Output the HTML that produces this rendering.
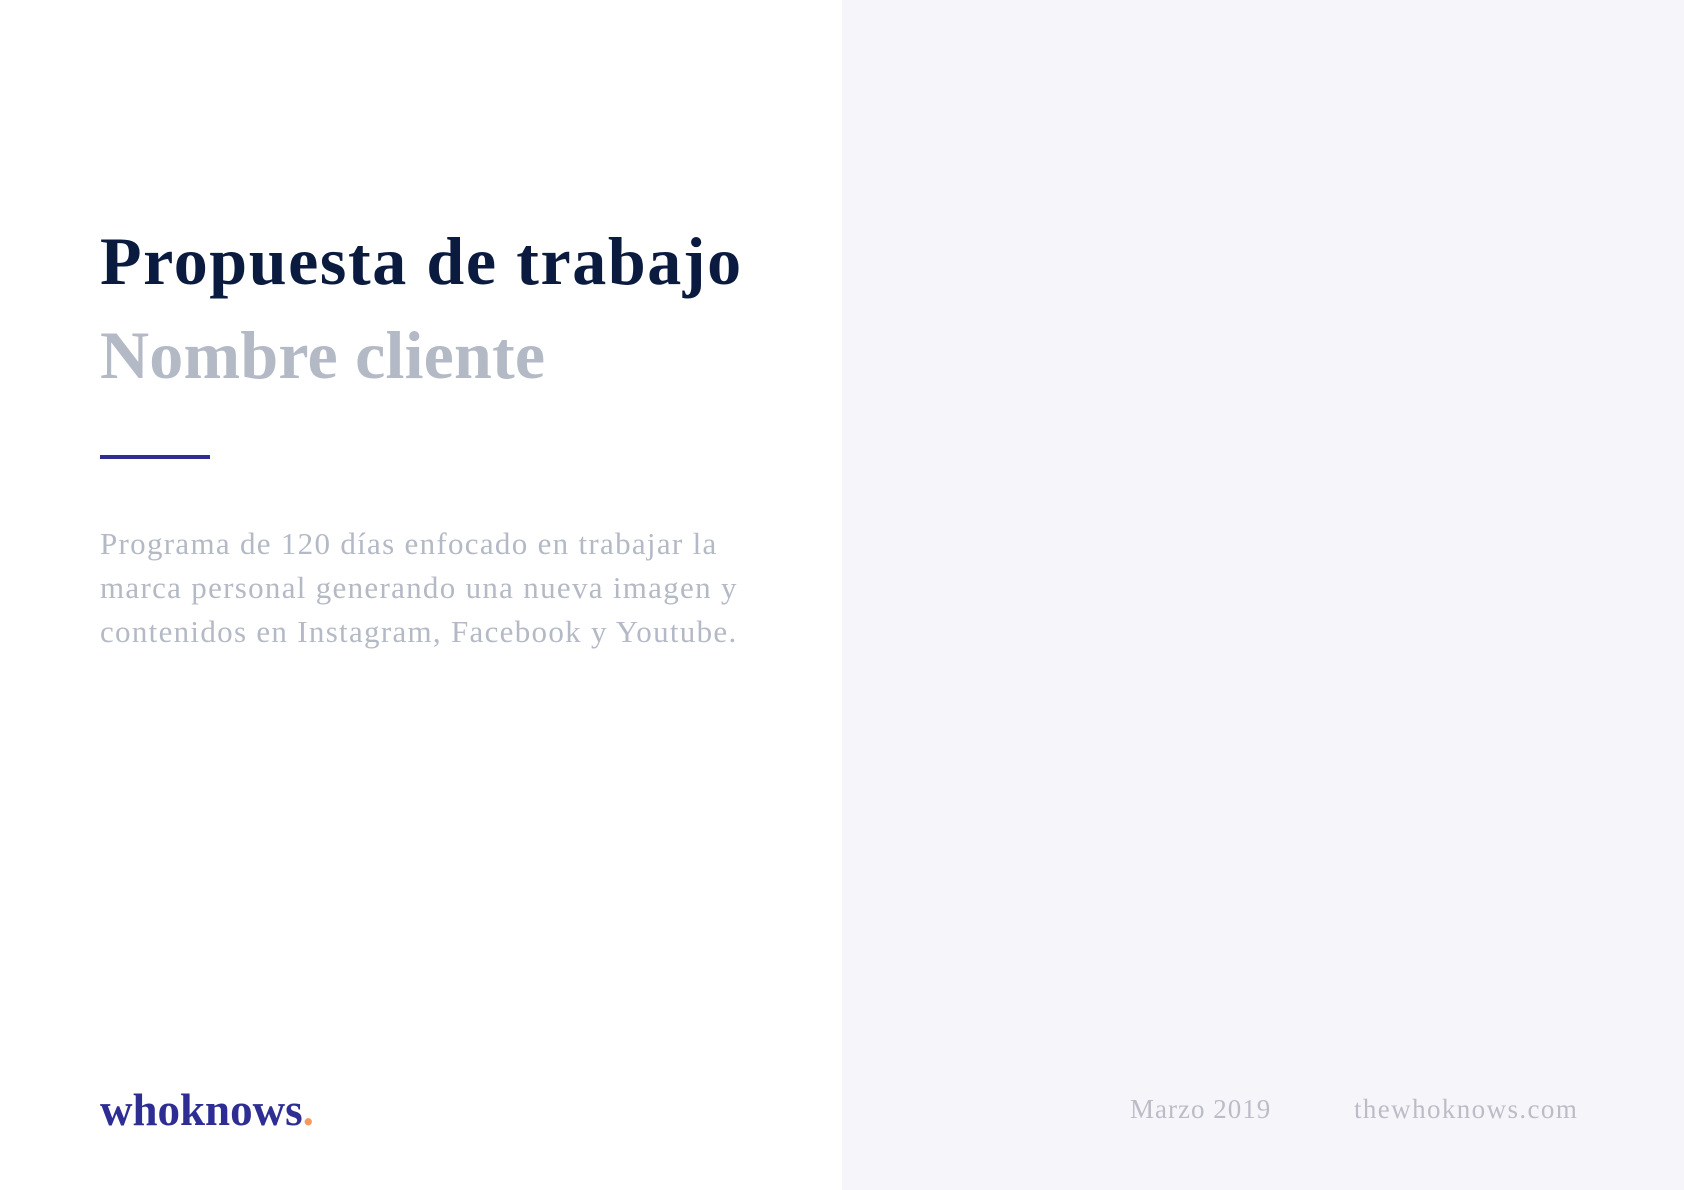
<!DOCTYPE html>
<html><head><meta charset="utf-8"><style>
html,body{margin:0;padding:0;}
body{width:1684px;height:1190px;position:relative;overflow:hidden;background:#fff;font-family:"Liberation Serif",serif;}
.right{position:absolute;left:842px;top:0;width:842px;height:1190px;background:#f6f6fa;}
.t{position:absolute;white-space:nowrap;line-height:1;}
</style></head><body>
<div class="right"></div>
<div class="t" style="left:100px;top:227px;font-size:68px;font-weight:bold;color:#0b1a3f;letter-spacing:1.6px;">Propuesta de trabajo</div>
<div class="t" style="left:100px;top:321px;font-size:68px;font-weight:bold;color:#b4b9c6;letter-spacing:0.2px;">Nombre cliente</div>
<div style="position:absolute;left:100px;top:455px;width:110px;height:4px;background:#2e2d94;"></div>
<div style="position:absolute;left:100px;top:522px;width:720px;font-size:31px;line-height:44px;letter-spacing:1.3px;color:#b4b9c6;white-space:nowrap;">Programa de 120 días enfocado en trabajar la<br>marca personal generando una nueva imagen y<br>contenidos en Instagram, Facebook y Youtube.</div>
<div class="t" style="left:100px;top:1088px;font-size:45px;font-weight:bold;color:#2e2d94;">whoknows<span style="color:#f59a5f">.</span></div>
<div class="t" style="left:1130px;top:1096px;font-size:27px;color:#bcbcc9;letter-spacing:1px;">Marzo 2019</div>
<div class="t" style="left:1354px;top:1096px;font-size:27px;color:#bcbcc9;letter-spacing:1.4px;">thewhoknows.com</div>
</body></html>
